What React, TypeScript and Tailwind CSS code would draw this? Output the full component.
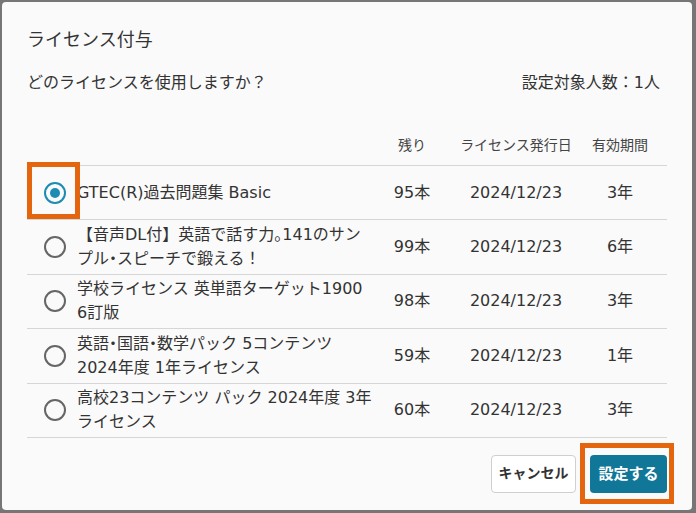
import React from 'react'

type License = {
  lines: string[]
  remain: string
  issued: string
  term: string
}

const licenses: License[] = [
  { lines: ['GTEC(R)過去問題集 Basic'], remain: '95本', issued: '2024/12/23', term: '3年' },
  { lines: ['【音声DL付】英語で話す力。141のサン', 'プル・スピーチで鍛える！'], remain: '99本', issued: '2024/12/23', term: '6年' },
  { lines: ['学校ライセンス 英単語ターゲット1900', '6訂版'], remain: '98本', issued: '2024/12/23', term: '3年' },
  { lines: ['英語・国語・数学パック 5コンテンツ', '2024年度 1年ライセンス'], remain: '59本', issued: '2024/12/23', term: '1年' },
  { lines: ['高校23コンテンツ パック 2024年度 3年', 'ライセンス'], remain: '60本', issued: '2024/12/23', term: '3年' },
]

// narrow punctuation like the original (。 and ・ take half width)
function Narrow({ text }: { text: string }) {
  const parts = text.split(/([。・])/)
  return (
    <>
      {parts.map((p, i) =>
        p === '。' || p === '・' ? (
          <span key={i} className="[font-feature-settings:'halt']">
            {p}
          </span>
        ) : (
          <React.Fragment key={i}>{p}</React.Fragment>
        )
      )}
    </>
  )
}

function Radio({ checked }: { checked: boolean }) {
  if (checked) {
    return (
      <span className="ml-[17px] flex h-[22px] w-[22px] items-center justify-center rounded-full border-[2.5px] border-[#1c8cb2]">
        <span className="h-[10px] w-[10px] rounded-full bg-[#1c8cb2]" />
      </span>
    )
  }
  return <span className="ml-[17px] block h-[22px] w-[22px] rounded-full border-2 border-[#666]" />
}

export default function App() {
  return (
    <div
      className="h-[513px] w-[696px] bg-[#767676] pl-[2px] pt-[2px] text-[#333]"
      style={{ fontFamily: '"DejaVu Sans", "Noto Sans CJK JP", sans-serif' }}
    >
      <div className="flex h-[508px] w-[690px] flex-col rounded-[4px] bg-[#fafafa] px-[25px] pt-[25px]">
        {/* Title */}
        <h2 className="text-[18px] leading-[26px]">ライセンス付与</h2>

        <div className="mt-[18px] flex justify-between pr-[7px] text-[16px] leading-[24px]">
          <span>どのライセンスを使用しますか？</span>
          <span>設定対象人数：1人</span>
        </div>

        {/* Table */}
        <div className="mt-[39px]">
          <div className="flex border-b border-[#d6d6d6] pb-[9px] text-[14px] leading-[22px] text-[#444]">
            <div className="w-[50px]" />
            <div className="w-[288px]" />
            <div className="w-[94px] text-center">残り</div>
            <div className="w-[114px] text-center">ライセンス発行日</div>
            <div className="w-[94px] text-center">有効期間</div>
          </div>

          {licenses.map((lic, i) => (
            <div
              key={i}
              className="relative flex h-[54.4px] items-center border-b border-[#d6d6d6] text-[16px] leading-[24px]"
            >
              <div className="flex w-[50px] items-center">
                <Radio checked={i === 0} />
              </div>
              <div className="w-[288px] whitespace-nowrap">
                {lic.lines.map((l, j) => (
                  <div key={j}>
                    <Narrow text={l} />
                  </div>
                ))}
              </div>
              <div className="w-[94px] text-center">{lic.remain}</div>
              <div className="w-[114px] text-center">{lic.issued}</div>
              <div className="w-[94px] text-center">{lic.term}</div>
              {i === 0 && (
                <div className="absolute left-0 top-[-4px] h-[57px] w-[53px] border-[5px] border-[#e5650e]" />
              )}
            </div>
          ))}
        </div>

        {/* Footer */}
        <div className="mt-[17px] flex justify-end gap-[14px]">
          <button className="h-[38px] w-[85px] rounded-[4px] border border-[#cfcfcf] bg-white text-[14px] font-semibold text-[#333]">
            キャンセル
          </button>
          <div className="relative">
            <button className="h-[38px] w-[77px] rounded-[4px] bg-[#117799] text-[15px] font-bold text-white">
              設定する
            </button>
            <div className="absolute bottom-[-11px] left-[-10px] right-[-7px] top-[-12px] border-[5px] border-[#e5650e]" />
          </div>
        </div>
      </div>
    </div>
  )
}
